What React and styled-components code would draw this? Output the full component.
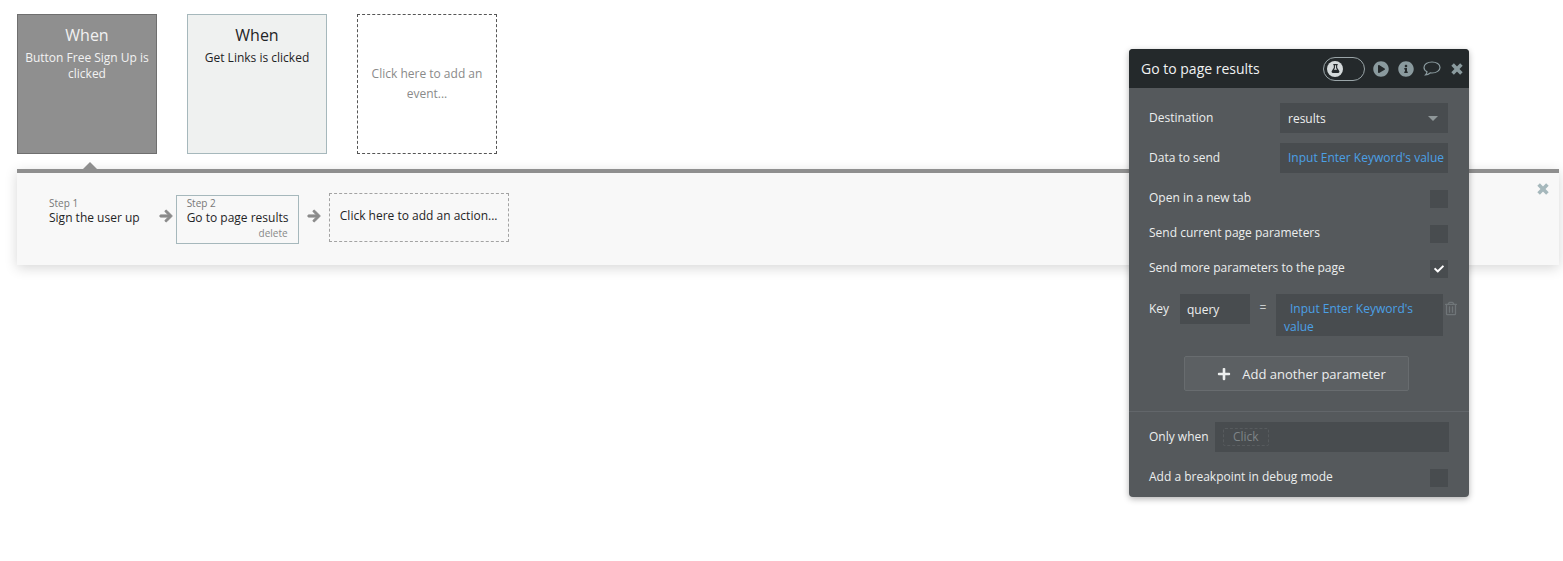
import React from "react";
import styled, { createGlobalStyle } from "styled-components";
import {
  FaArrowRight,
  FaCheck,
  FaFlask,
  FaInfoCircle,
  FaPlayCircle,
  FaPlus,
  FaRegTrashAlt,
} from "react-icons/fa";

const GlobalStyle = createGlobalStyle`
  html, body {
    margin: 0;
    padding: 0;
    background: #fff;
    font-family: "Open Sans", "Liberation Sans", sans-serif;
    overflow: hidden;
  }
`;

const Page = styled.div`
  position: relative;
  width: 1563px;
  height: 561px;
  padding: 14px 4px 0 17px;
  box-sizing: border-box;
`;

const EventRow = styled.div`
  display: flex;
  gap: 30px;
`;

const EventCard = styled.div`
  width: 140px;
  height: 140px;
  box-sizing: border-box;
  padding: 9px 6px 0;
  text-align: center;
  color: ${(p) => (p.$active ? "#f2f2f2" : "#1f2426")};
  background: ${(p) => (p.$active ? "#8f8f8f" : "#eff1f0")};
  border: 1px solid ${(p) => (p.$active ? "#6f6f6f" : "#a6b8bc")};
`;

const EventTitle = styled.div`
  font-size: 16px;
  line-height: 22px;
  margin-bottom: 4px;
`;

const EventText = styled.div`
  font-size: 12px;
  line-height: 16px;
`;

const AddEvent = styled.div`
  width: 140px;
  height: 140px;
  box-sizing: border-box;
  padding: 0 10px;
  display: flex;
  align-items: center;
  justify-content: center;
  text-align: center;
  font-size: 12px;
  line-height: 20px;
  color: #8a8a8a;
  border: 1px dashed #555;
`;

const Workflow = styled.div`
  position: relative;
  margin-top: 15px;
  height: 96px;
  box-sizing: border-box;
  padding: 20px 0 0 21px;
  display: flex;
  align-items: flex-start;
  background: #f8f8f8;
  border-top: 4px solid #8f8f8f;
  box-shadow: 0 3px 12px rgba(0, 0, 0, 0.16);
`;

const Pointer = styled.div`
  position: absolute;
  left: 66px;
  top: -11px;
  width: 0;
  height: 0;
  border-left: 7px solid transparent;
  border-right: 7px solid transparent;
  border-bottom: 7px solid #8f8f8f;
`;

const CloseWorkflow = styled.div`
  position: absolute;
  right: 10px;
  top: 10px;
  display: flex;
  color: #a6b8bc;
`;

const Step = styled.div`
  box-sizing: border-box;
  height: 49px;
  margin-top: 2px;
  padding: 0 10px;
  width: ${(p) => (p.$selected ? "123px" : "auto")};
  border: 1px solid ${(p) => (p.$selected ? "#a6b8bc" : "transparent")};
  color: #1f2426;
`;

const StepNum = styled.div`
  font-size: 10px;
  line-height: 14px;
  color: #777;
`;

const StepName = styled.div`
  font-size: 12px;
  line-height: 16px;
  white-space: nowrap;
`;

const StepDelete = styled.div`
  font-size: 10px;
  line-height: 14px;
  text-align: right;
  color: #888;
`;

const Arrow = styled(FaArrowRight)`
  width: 14px;
  height: 14px;
  color: #8a8a8a;
  flex: none;
  stroke: currentColor;
  stroke-width: 36px;
  margin: ${(p) => p.$margin};
`;

const AddAction = styled.div`
  box-sizing: border-box;
  width: 180px;
  height: 49px;
  padding-top: 13px;
  text-align: center;
  font-size: 12px;
  line-height: 18px;
  color: #1f2426;
  border: 1px dashed #a3a3a3;
`;

const Editor = styled.div`
  position: absolute;
  left: 1129px;
  top: 49px;
  width: 340px;
  height: 448px;
  display: flex;
  flex-direction: column;
  background: #55595c;
  border-radius: 4px;
  box-shadow: 0 2px 6px rgba(0, 0, 0, 0.3);
  overflow: hidden;
  color: #eceeee;
`;

const EditorHeader = styled.div`
  height: 39px;
  flex: none;
  display: flex;
  align-items: center;
  padding: 0 6px 0 12px;
  background: #24292b;
  color: #f0f2f2;
  font-size: 14px;
`;

const HeaderTitle = styled.div`
  flex: 1;
`;

const Toggle = styled.div`
  box-sizing: border-box;
  width: 42px;
  height: 24px;
  margin-right: 8px;
  padding: 3px;
  border: 1px solid #9aa5a8;
  border-radius: 12px;
`;

const ToggleKnob = styled.div`
  width: 16px;
  height: 16px;
  border-radius: 50%;
  background: #d5dadb;
  color: #24292b;
  display: flex;
  align-items: center;
  justify-content: center;
  font-size: 9px;
`;

const HeaderIcon = styled.span`
  display: flex;
  color: #8a9a9e;
  font-size: ${(p) => p.$size}px;
  margin-right: ${(p) => p.$gap}px;
`;

const EditorBody = styled.div`
  padding: 15px 21px 0 20px;
`;

const Row = styled.div`
  display: flex;
  align-items: center;
  justify-content: space-between;
  font-size: 12px;
  height: ${(p) => p.$height}px;
  margin-bottom: ${(p) => p.$after || 0}px;
`;

// labels sit a bit above the centre of their row
const Label = styled.div`
  margin-top: ${(p) => p.$lift || -4}px;
`;

const Field = styled.div`
  box-sizing: border-box;
  width: 168px;
  height: 30px;
  padding: 0 4px ${(p) => (p.$link ? "2px" : "0")} 8px;
  display: flex;
  align-items: center;
  justify-content: space-between;
  background: #484c4f;
  font-size: 12px;
  white-space: nowrap;
  color: ${(p) => (p.$link ? "#4ba0e6" : "#eceeee")};
`;

const Caret = styled.span`
  width: 0;
  height: 0;
  margin-right: 6px;
  border-left: 5px solid transparent;
  border-right: 5px solid transparent;
  border-top: 5px solid #8f9799;
`;

const Checkbox = styled.div`
  width: 18px;
  height: 18px;
  background: #484c4f;
  display: flex;
  align-items: center;
  justify-content: center;
  color: #fff;
  font-size: 10px;
`;

const KeyRow = styled.div`
  display: flex;
  align-items: flex-start;
  font-size: 12px;
  margin-top: 16px;
`;

const KeyLabel = styled.div`
  flex: none;
  width: 31px;
  line-height: 30px;
`;

const KeyInput = styled.div`
  flex: none;
  box-sizing: border-box;
  width: 70px;
  height: 30px;
  padding: 0 7px;
  line-height: 31px;
  background: #484c4f;
`;

const Equals = styled.div`
  flex: none;
  width: 26px;
  text-align: center;
  line-height: 28px;
  color: #c9cdce;
`;

const ValueBox = styled.div`
  flex: none;
  box-sizing: border-box;
  width: 167px;
  height: 42px;
  padding: 6px 8px 0;
  text-indent: 6px;
  line-height: 18px;
  background: #484c4f;
  color: #4ba0e6;
`;

const Trash = styled(FaRegTrashAlt)`
  width: 12px;
  height: 15px;
  margin: 7px 0 0 2px;
  color: #6f7578;
  flex: none;
`;

const AddButton = styled.div`
  box-sizing: border-box;
  width: 225px;
  height: 35px;
  margin: 20px 0 0 35px;
  padding-left: 10px;
  display: flex;
  align-items: center;
  justify-content: center;
  gap: 11px;
  font-size: 13px;
  background: #5c6063;
  border: 1px solid #686c6f;
  border-radius: 2px;
`;

const Divider = styled.div`
  height: 1px;
  margin-top: 20px;
  background: #62666a;
`;

const EditorFooter = styled.div`
  padding: 10px 21px 0 20px;
`;

const WhenField = styled.div`
  box-sizing: border-box;
  width: 234px;
  height: 30px;
  margin-right: -1px;
  padding-left: 8px;
  display: flex;
  align-items: center;
  background: #484c4f;
`;

const ClickChip = styled.div`
  padding: 0 9px;
  height: 16px;
  line-height: 16px;
  font-size: 12px;
  color: #7f8588;
  border: 1px dashed #575b5e;
  border-radius: 2px;
`;

const CrossIcon = () => (
  <svg width="12" height="12" viewBox="0 0 12 12">
    <path
      d="M1.6 1.6 L10.4 10.4 M10.4 1.6 L1.6 10.4"
      stroke="currentColor"
      strokeWidth="3.6"
      fill="none"
    />
  </svg>
);

const BubbleIcon = () => (
  <svg width="18" height="17" viewBox="0 0 18 17">
    <path
      d="M9 2 C4.5 2 1 4.4 1 7.5 C1 9.3 2.2 10.8 4 11.8 C3.8 13 3.2 14 2.5 14.8 C4.5 14.6 6 13.8 7.2 12.9 C7.8 13 8.4 13 9 13 C13.5 13 17 10.5 17 7.5 C17 4.4 13.5 2 9 2 Z"
      stroke="currentColor"
      strokeWidth="1.2"
      fill="none"
    />
  </svg>
);

const App = () => {
  return (
    <Page>
      <GlobalStyle />
      <EventRow>
        <EventCard $active>
          <EventTitle>When</EventTitle>
          <EventText>Button Free Sign Up is clicked</EventText>
        </EventCard>
        <EventCard>
          <EventTitle>When</EventTitle>
          <EventText>Get Links is clicked</EventText>
        </EventCard>
        <AddEvent>Click here to add an event...</AddEvent>
      </EventRow>

      <Workflow>
        <Pointer />
        <CloseWorkflow>
          <CrossIcon />
        </CloseWorkflow>
        <Step>
          <StepNum>Step 1</StepNum>
          <StepName>Sign the user up</StepName>
        </Step>
        <Arrow $margin="16px 3px 0 8px" />
        <Step $selected>
          <StepNum>Step 2</StepNum>
          <StepName>Go to page results</StepName>
          <StepDelete>delete</StepDelete>
        </Step>
        <Arrow $margin="16px 8px 0 8px" />
        <AddAction>Click here to add an action...</AddAction>
      </Workflow>

      <Editor>
        <EditorHeader>
          <HeaderTitle>Go to page results</HeaderTitle>
          <Toggle>
            <ToggleKnob>
              <FaFlask />
            </ToggleKnob>
          </Toggle>
          <HeaderIcon $size={16} $gap={9}>
            <FaPlayCircle />
          </HeaderIcon>
          <HeaderIcon $size={16} $gap={9}>
            <FaInfoCircle />
          </HeaderIcon>
          <HeaderIcon $gap={10}>
            <BubbleIcon />
          </HeaderIcon>
          <HeaderIcon $gap={0}>
            <CrossIcon />
          </HeaderIcon>
        </EditorHeader>

        <EditorBody>
          <Row $height={30} $after={10}>
            <Label $lift={-2}>Destination</Label>
            <Field>
              results
              <Caret />
            </Field>
          </Row>
          <Row $height={30} $after={17}>
            <Label $lift={-2}>Data to send</Label>
            <Field $link>Input Enter Keyword's value</Field>
          </Row>
          <Row $height={18} $after={17}>
            <Label>Open in a new tab</Label>
            <Checkbox />
          </Row>
          <Row $height={18} $after={17}>
            <Label>Send current page parameters</Label>
            <Checkbox />
          </Row>
          <Row $height={18}>
            <Label>Send more parameters to the page</Label>
            <Checkbox>
              <FaCheck />
            </Checkbox>
          </Row>
          <KeyRow>
            <KeyLabel>Key</KeyLabel>
            <KeyInput>query</KeyInput>
            <Equals>=</Equals>
            <ValueBox>Input Enter Keyword's value</ValueBox>
            <Trash />
          </KeyRow>
          <AddButton>
            <FaPlus size={14} />
            Add another parameter
          </AddButton>
        </EditorBody>

        <Divider />

        <EditorFooter>
          <Row $height={30} $after={17}>
            <Label $lift={-1}>Only when</Label>
            <WhenField>
              <ClickChip>Click</ClickChip>
            </WhenField>
          </Row>
          <Row $height={18}>
            <Label>Add a breakpoint in debug mode</Label>
            <Checkbox />
          </Row>
        </EditorFooter>
      </Editor>
    </Page>
  );
};

export default App;
